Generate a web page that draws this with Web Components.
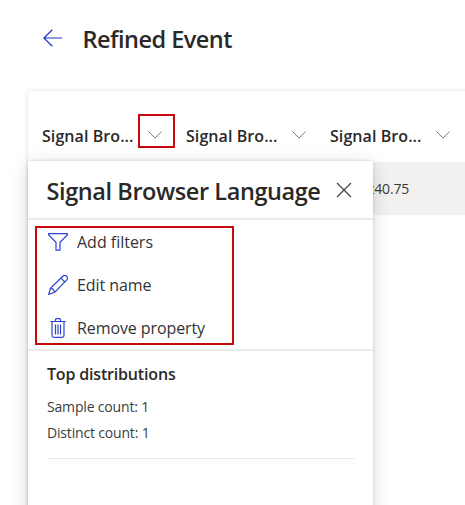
<!DOCTYPE html>
<html lang="en"><head><meta charset="utf-8"><title>Refined Event</title>
<style>
html,body{margin:0;width:465px;height:505px;overflow:hidden;background:#fff}
body{font-family:"Open Sans","Noto Sans",sans-serif;color:#2a2928}
</style></head><body>
<event-page></event-page>
<script>
// A single line of text whose tracking is adjusted to fill a given width.
class FitText extends HTMLElement{
 connectedCallback(){
  this.attachShadow({mode:'open'}).innerHTML=`<style>:host{display:block;white-space:nowrap;flex:none}span{display:inline-block}</style><span><slot></slot></span>`;
  const s=this.shadowRoot.querySelector('span'),w=+this.getAttribute('width'),n=this.textContent.length;
  s.style.letterSpacing=((w-s.getBoundingClientRect().width)/n)+'px';
 }
}
const icons={
 back:[20,18,'<path d="M9.3.8.9 9l8.4 8.2M.9 9h18.3"/>'],
 chevron:[14,8,'<path d="M.4.5 7 7.1 13.6.5"/>'],
 close:[16,16,'<path d="m1 1 14 14M15 1 1 15"/>'],
 filter:[20,18,'<path d="M.7.7h18.6v1.2L12 9.3v7.9H8V9.3L.7 1.9z"/>'],
 edit:[20,20,'<path d="m.8 19.2 1.6-5.8L14.8 1.3a2.5 2.5 0 0 1 3.8 0 2.6 2.6 0 0 1 0 3.8L6.5 17.5zM2.4 13.4c2 .1 3.8 1.8 4.1 4.1M13 3.1 16.9 7"/>'],
 trash:[16,20,'<path d="M.4 3.5h15.2M5.5 3.5V1.8Q5.5.7 6.6.7h2.8q1.1 0 1.1 1.1v1.7M2 3.5v14q0 1.8 1.8 1.8h8.4q1.8 0 1.8-1.8v-14M5.5 6.5v10M8 6.5v10M10.5 6.5v10"/>']
};
class UiIcon extends HTMLElement{
 connectedCallback(){
  const [w,h,p]=icons[this.getAttribute('name')];
  this.attachShadow({mode:'open'}).innerHTML=`<style>:host{display:block;flex:none}svg{display:block;fill:none;stroke:currentColor;stroke-width:var(--stroke,1.2)}</style><svg width="${w}" height="${h}" viewBox="0 0 ${w} ${h}">${p}</svg>`;
 }
}
class ColumnHead extends HTMLElement{
 connectedCallback(){
  this.attachShadow({mode:'open'}).innerHTML=`<style>
  :host{display:flex;box-sizing:border-box;width:144px;height:34px;flex:none;align-items:flex-start}
  fit-text{width:96px;font-size:16px;font-weight:600;line-height:22px;padding-top:11px}
  .b{box-sizing:border-box;width:37px;height:34px;border:2px solid transparent;display:flex;padding:15px 0 0 8px;color:#777;--stroke:1}
  :host([marked]) .b{border-color:#c8090b}
  </style><fit-text width="91.5">Signal Bro...</fit-text><div class="b"><ui-icon name="chevron"></ui-icon></div>`;
 }
}
class MenuItem extends HTMLElement{
 connectedCallback(){
  this.attachShadow({mode:'open'}).innerHTML=`<style>
  :host{display:flex;height:43px;align-items:flex-start}
  .i{width:19px;height:20px;display:flex;justify-content:center;align-items:center;margin-right:10px;padding-top:2px;color:#2d43cf}
  fit-text{font-size:16px;line-height:24px;color:#333}
  </style><div class="i"><ui-icon name="${this.getAttribute('icon')}"></ui-icon></div><fit-text width="${this.getAttribute('width')}">${this.getAttribute('label')}</fit-text>`;
 }
}
class PropertyPanel extends HTMLElement{
 connectedCallback(){
  this.attachShadow({mode:'open'}).innerHTML=`<style>
  :host{display:block;box-sizing:border-box;width:345px;height:360px;background:#fff;box-shadow:0 3px 16px rgba(0,0,0,.16),0 0 3px rgba(0,0,0,.14)}
  header{box-sizing:border-box;height:59px;border-bottom:2px solid #ebebeb;display:flex;padding:13px 0 0 18.5px}
  header fit-text{font-size:23.5px;font-weight:600;line-height:34px;width:289.5px}
  header ui-icon{padding-top:8px;color:#444;--stroke:1.2}
  .menu{box-sizing:border-box;height:131px;border-bottom:2px solid #ebebeb;padding:6px 0 0 7px}
  .box{box-sizing:border-box;width:199px;height:119px;border:2px solid #c8090b;padding:2px 0 0 11px}
  .stats{padding:12px 19px 0}
  .stats fit-text{font-size:14px;line-height:20px;color:#3c3c3c}
  .stats .h{font-size:16px;line-height:22px;font-weight:600;color:#2a2928;margin-bottom:12px}
  .stats .d{margin-top:6px}
  hr{border:0;height:1px;background:#e9e9e9;margin:15px 0 0}
  </style><header><fit-text width="274">Signal Browser Language</fit-text><ui-icon name="close"></ui-icon></header>
  <div class="menu"><div class="box">
  <menu-item icon="filter" label="Add filters" width="76"></menu-item>
  <menu-item icon="edit" label="Edit name" width="74.5"></menu-item>
  <menu-item icon="trash" label="Remove property" width="128"></menu-item></div></div>
  <div class="stats"><fit-text class="h" width="128.5">Top distributions</fit-text>
  <fit-text width="102">Sample count: 1</fit-text><fit-text class="d" width="102.5">Distinct count: 1</fit-text><hr></div>`;
 }
}
class EventPage extends HTMLElement{
 connectedCallback(){
  this.attachShadow({mode:'open'}).innerHTML=`<style>
  :host{display:block;width:465px;height:505px;overflow:hidden;position:relative;background:#fff}
  .top{height:91px;display:flex;box-sizing:border-box;padding:22px 0 0 43px}
  .top ui-icon{padding-top:7px;color:#1f32c8;margin-right:19.5px}
  .top fit-text{font-size:23.5px;font-weight:600;line-height:34px}
  .card{box-sizing:border-box;margin-left:28px;width:460px;height:440px;border-radius:4px 0 0;box-shadow:0 0 5px rgba(0,0,0,.13);padding-top:23px;background:#fff}
  .heads{display:flex;padding-left:14px;height:48px;box-sizing:border-box}
  .row{height:53px;background:#f2f1f0;display:flex;box-sizing:border-box;padding:17px 0 0 338.5px;font-size:14px;line-height:20px;color:#3b3a39}
  property-panel{position:absolute;left:28px;top:161px}
  </style><div class="top"><ui-icon name="back"></ui-icon><fit-text width="149.5">Refined Event</fit-text></div>
  <div class="card"><div class="heads"><column-head marked></column-head><column-head></column-head><column-head></column-head></div>
  <div class="row"><fit-text width="42.5">240.75</fit-text></div></div>
  <property-panel></property-panel>`;
 }
}
customElements.define('fit-text',FitText);
customElements.define('ui-icon',UiIcon);
customElements.define('column-head',ColumnHead);
customElements.define('menu-item',MenuItem);
customElements.define('property-panel',PropertyPanel);
customElements.define('event-page',EventPage);
</script></body></html>
